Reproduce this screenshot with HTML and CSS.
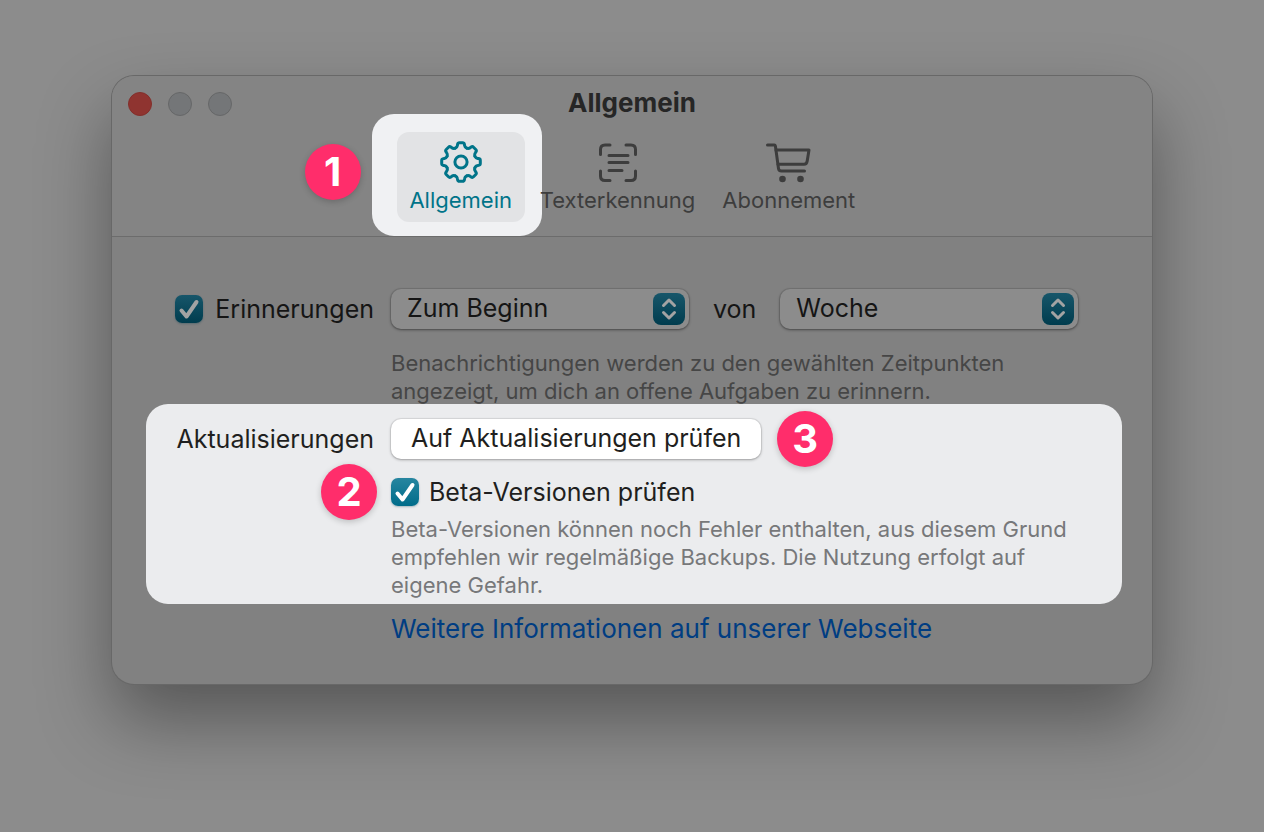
FILE: index.html
```html
<!DOCTYPE html>
<html lang="de">
<head>
  <meta charset="UTF-8" />
  <meta name="viewport" content="width=device-width, initial-scale=1" />
  <title>Allgemein</title>
  <link rel="stylesheet" href="styles.css">
</head>
<body>
  <main class="window">

    <header class="window-header">
      <div class="titlebar">
        <div class="lights">
          <button class="light light-close" type="button" aria-label="Schließen"></button>
          <button class="light" type="button" aria-label="Minimieren" disabled></button>
          <button class="light" type="button" aria-label="Zoomen" disabled></button>
        </div>
        <h1>Allgemein</h1>
      </div>

      <nav class="toolbar">
        <div class="tab-spot">
          <button class="tab tab-active" type="button">
            <svg class="tab-icon" viewBox="-21 -21 42 42" aria-hidden="true">
              <defs>
                <path id="tooth" d="M-5.75-13.88Q-3.9-14.65-3.6-16.6L-3.4-17.7Q-3.1-19.3-1.6-19.3H1.6Q3.1-19.3 3.4-17.7L3.6-16.6Q3.9-14.65 5.75-13.88" />
              </defs>
              <use href="#tooth" />
              <use href="#tooth" transform="rotate(45)" />
              <use href="#tooth" transform="rotate(90)" />
              <use href="#tooth" transform="rotate(135)" />
              <use href="#tooth" transform="rotate(180)" />
              <use href="#tooth" transform="rotate(225)" />
              <use href="#tooth" transform="rotate(270)" />
              <use href="#tooth" transform="rotate(315)" />
              <circle r="6.1" />
            </svg>
            <span>Allgemein</span>
          </button>
          <span class="badge badge-tab">1</span>
        </div>

        <button class="tab" type="button">
          <svg class="tab-icon" viewBox="0 0 42 42" aria-hidden="true">
            <path d="M3.5 13.5V8.5Q3.5 4 8 4H13M29 4H34Q38.5 4 38.5 8.5V13.5M38.5 30V35Q38.5 39.5 34 39.5H29M13 39.5H8Q3.5 39.5 3.5 35V30" />
            <path d="M12 14.5H31M12 21.5H31M12 29.500H25" />
          </svg>
          <span>Texterkennung</span>
        </button>

        <button class="tab" type="button">
          <svg class="tab-icon tab-icon-cart" viewBox="0 0 46 42" aria-hidden="true">
            <path d="M1.5 4H8.300Q9.200 4 9.400 5L12.500 27.500Q12.700 30 15.500 30H38.500" />
            <path d="M10 9H43L41.200 20Q40.700 23.300 38 23.300H12" />
            <circle class="dot" cx="16.500" cy="38" r="3.300" />
            <circle class="dot" cx="34.500" cy="38" r="3.300" />
          </svg>
          <span>Abonnement</span>
        </button>
      </nav>
    </header>

    <form class="settings">

      <!-- Erinnerungen -->
      <section class="row">
        <div class="row-label">
          <span class="check check-dim">
            <input type="checkbox" id="erinnerungen" checked>
            <svg viewBox="0 0 28 28" aria-hidden="true"><path d="M6.500 15.500L11.500 21.500L21.500 7" /></svg>
          </span>
          <label for="erinnerungen">Erinnerungen</label>
        </div>
        <div class="row-content">
          <div class="selects">
            <span class="select">
              <select aria-label="Zeitpunkt">
                <option>Zum Beginn</option>
                <option>Zum Ende</option>
              </select>
              <svg viewBox="0 0 32 32" aria-hidden="true"><path d="M10.500 12.500L16 7L21.500 12.500M10.500 19.500L16 25L21.500 19.500" /></svg>
            </span>
            <span>von</span>
            <span class="select">
              <select aria-label="Zeitraum">
                <option>Woche</option>
                <option>Monat</option>
              </select>
              <svg viewBox="0 0 32 32" aria-hidden="true"><path d="M10.500 12.500L16 7L21.500 12.500M10.500 19.500L16 25L21.500 19.500" /></svg>
            </span>
          </div>
          <p class="help help-dim">Benachrichtigungen werden zu den gewählten Zeitpunkten<br>angezeigt, um dich an offene Aufgaben zu erinnern.</p>
        </div>
      </section>

      <!-- Aktualisierungen -->
      <section class="row row-highlight">
        <div class="row-label">Aktualisierungen</div>
        <div class="row-content">
          <div class="update">
            <button class="push" type="button">Auf Aktualisierungen prüfen</button>
            <span class="badge">3</span>
          </div>
          <div class="beta">
            <span class="check">
              <input type="checkbox" id="beta" checked>
              <svg viewBox="0 0 28 28" aria-hidden="true"><path d="M6.500 15.500L11.500 21.500L21.500 7" /></svg>
            </span>
            <label for="beta">Beta-Versionen prüfen</label>
            <span class="badge badge-beta">2</span>
          </div>
          <p class="help">Beta-Versionen können noch Fehler enthalten, aus diesem Grund<br>empfehlen wir regelmäßige Backups. Die Nutzung erfolgt auf<br>eigene Gefahr.</p>
        </div>
      </section>

      <div class="row">
        <a class="more" href="#">Weitere Informationen auf unserer Webseite</a>
      </div>

    </form>
  </main>
</body>
</html>
```
FILE: styles.css
```css
* {
  box-sizing: border-box;
}

body {
  margin: 0;
  padding: 76px 112px 148px;
  min-height: 100vh;
  font-family: Inter, sans-serif;
  font-size: 25px;
  line-height: 32px;
  color: #151515;
  background: #8c8c8c;
}

button,
select {
  margin: 0;
  border: 0;
  font: inherit;
  color: inherit;
}

.window {
  background: #818181;
  border-radius: 22px;
  box-shadow: 0 0 0 1px #686868, 0 36px 72px rgba(0, 0, 0, 0.38);
}

/* Titelleiste und Tabs */
.window-header {
  padding-bottom: 14px;
  border-bottom: 1px solid #6c6c6c;
  border-radius: 22px 22px 0 0;
  background: #848484;
}

.titlebar {
  display: grid;
  grid-template-columns: 1fr auto 1fr;
  align-items: center;
  height: 56px;
  padding: 0 16px;
}

.titlebar h1 {
  margin: 0;
  padding-bottom: 2px;
  font-size: 26px;
  font-weight: 700;
  color: #262626;
}

.lights {
  display: flex;
  gap: 16px;
}

.light {
  width: 24px;
  height: 24px;
  padding: 0;
  border: 1px solid #666768;
  border-radius: 50%;
  background: #747678;
}

.light-close {
  border-color: #832f2b;
  background: #8f3430;
}

.toolbar {
  display: flex;
  justify-content: center;
  gap: 3px;
}

.tab-spot {
  position: relative;
}

/* helle Fläche hinter dem aktiven Tab */
.tab-spot::before {
  content: "";
  position: absolute;
  inset: -18px -17px -14px -25px;
  border-radius: 22px;
  background: #f0f1f3;
}

.tab {
  position: relative;
  display: flex;
  flex-direction: column;
  align-items: center;
  gap: 3px;
  min-width: 128px;
  padding: 9px 12px 8px;
  border-radius: 12px;
  background: none;
  font-size: 22px;
  line-height: 28px;
  color: #3d3d3d;
}

.tab-active {
  background: #e2e3e5;
  color: #007489;
}

.tab-icon {
  width: 42px;
  height: 42px;
  fill: none;
  stroke: currentColor;
  stroke-width: 3;
  stroke-linecap: round;
  stroke-linejoin: round;
}

.tab-icon-cart {
  width: 46px;
}

.tab-icon .dot {
  fill: currentColor;
  stroke: none;
}

/* Einstellungen */
.settings {
  padding: 52px 30px 39px 34px;
}

.row {
  display: grid;
  grid-template-columns: 228px 1fr;
  column-gap: 17px;
}

.row-label {
  display: flex;
  align-items: center;
  justify-content: flex-end;
  gap: 12px;
  height: 40px;
  white-space: nowrap;
}

.row-highlight {
  margin: -1px 0 9px;
  padding: 15px 0 5px;
  border-radius: 22px;
  background: #ebecee;
  color: #1f1f20;
}

.selects {
  display: flex;
  align-items: center;
  gap: 24px;
}

.select {
  position: relative;
  width: 298px;
}

.select select {
  display: block;
  appearance: none;
  width: 100%;
  height: 40px;
  padding: 0 48px 2px 16px;
  border-radius: 10px;
  background: #8c8c8c;
  box-shadow: 0 0 0 1px rgba(0, 0, 0, 0.08), 0 1px 3px rgba(0, 0, 0, 0.4);
}

.select svg {
  position: absolute;
  top: 4px;
  right: 4px;
  width: 32px;
  height: 32px;
  border-radius: 8px;
  background: linear-gradient(#17566a, #003c4e);
  fill: none;
  stroke: #a3a3a3;
  stroke-width: 3;
  stroke-linecap: round;
  stroke-linejoin: round;
  pointer-events: none;
}

.check {
  position: relative;
  width: 28px;
  height: 28px;
}

.check input {
  display: block;
  appearance: none;
  width: 28px;
  height: 28px;
  margin: 0;
  border-radius: 7px;
  background: linear-gradient(#2786a0, #006c8a);
  box-shadow: 0 1px 2px rgba(0, 60, 80, 0.3);
}

.check svg {
  position: absolute;
  inset: 0;
  fill: none;
  stroke: #fff;
  stroke-width: 4;
  stroke-linecap: round;
  stroke-linejoin: round;
  pointer-events: none;
}

.check input:not(:checked) + svg {
  display: none;
}

.check-dim input {
  background: linear-gradient(#17566a, #003c4e);
}

.check-dim svg {
  stroke: #a3a3a3;
}

.update {
  display: flex;
  align-items: center;
  gap: 16px;
  height: 40px;
}

.push {
  height: 40px;
  padding: 0 20px 2px;
  border-radius: 10px;
  background: #fff;
  box-shadow: 0 0 0 1px rgba(0, 0, 0, 0.06), 0 1px 3px rgba(0, 0, 0, 0.3);
  white-space: nowrap;
}

.beta {
  position: relative;
  display: flex;
  align-items: center;
  gap: 10px;
  margin-top: 17px;
}

.help {
  margin: 20px 0 0;
  font-size: 22px;
  line-height: 28px;
  color: #77787a;
  white-space: nowrap;
}

.help-dim {
  color: #464646;
}

.beta + .help {
  margin-top: 7px;
}

.more {
  grid-column: 2;
  font-size: 26px;
  color: #003d82;
  text-decoration: none;
  white-space: nowrap;
}

/* Nummern */
.badge {
  display: flex;
  align-items: center;
  justify-content: center;
  flex: none;
  width: 56px;
  height: 56px;
  border-radius: 50%;
  background: #ff2d6b;
  box-shadow: 0 2px 6px rgba(0, 0, 0, 0.2);
  font-size: 40px;
  font-weight: 700;
  color: #fff;
}

.badge-tab {
  position: absolute;
  top: 12px;
  left: -92px;
}

.badge-beta {
  position: absolute;
  top: -12px;
  left: -70px;
}
```
